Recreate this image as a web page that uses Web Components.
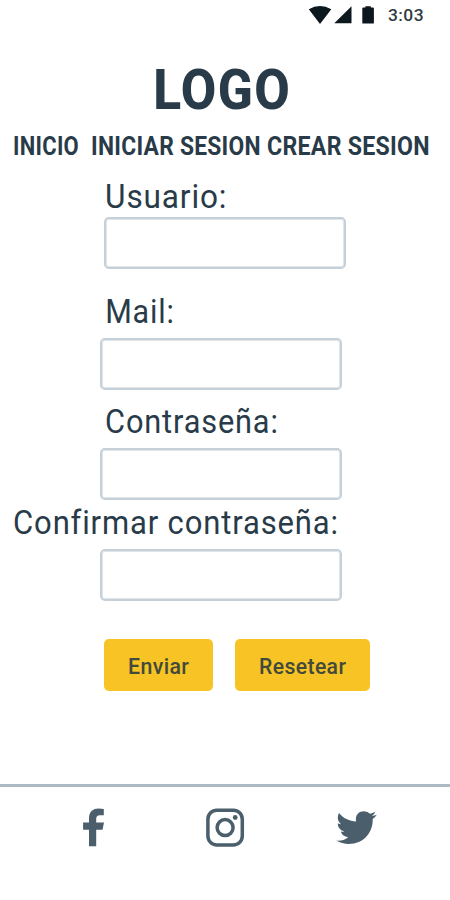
<!DOCTYPE html>
<html lang="es">
<head>
<meta charset="utf-8">
<title>Crear sesion</title>
<style>
html, body { margin: 0; background: #fff; }
body { font-family: Roboto, "Liberation Sans", sans-serif; color: #293b48; }
</style>
</head>
<body>
<app-screen></app-screen>
<script>
const define = (name, html, setup) => customElements.define(name, class extends HTMLElement {
  connectedCallback() {
    if (this.shadowRoot) return;
    this.attachShadow({ mode: 'open' }).innerHTML = html;
    if (setup) setup(this, this.shadowRoot);
  }
});

// A single line of type condensed or widened so its ink spans exactly [width] pixels.
const ctx = document.createElement('canvas').getContext('2d');
define('fit-text', `
<style>
:host { display: block; white-space: nowrap; flex: none; }
span { display: inline-block; transform-origin: 0 50%; font-variant-ligatures: none; }
</style><span></span>`, (el, root) => {
  const span = root.querySelector('span');
  const size = el.getAttribute('size'), weight = el.getAttribute('weight') || 400;
  const width = +el.getAttribute('width'), text = el.getAttribute('text');
  const spacing = +(el.getAttribute('spacing') || 0);
  span.textContent = text;
  span.style.letterSpacing = spacing + 'px';
  el.style.cssText += `;width:${width}px;height:${el.getAttribute('line')}px;line-height:${el.getAttribute('line')}px;font-size:${size}px;font-weight:${weight}`;
  ctx.font = `${weight} ${size}px Roboto, "Liberation Sans", sans-serif`;
  const m = ctx.measureText(text);
  const k = width / (m.actualBoundingBoxRight + m.actualBoundingBoxLeft + spacing * (text.length - 1));
  span.style.transform = `translateX(${m.actualBoundingBoxLeft * k}px) scaleX(${k})`;
});

define('status-bar', `
<style>
:host { display: flex; height: 30px; justify-content: flex-end; padding-right: 27px; color: #2f3b43; }
svg { width: 76px; height: 30px; margin-right: 4px; fill: #0d171e; }
</style>
<svg viewBox="308 0 76 30"><path d="M308.8 9.3Q320 2.8 331.3 9.3L320 23.9zM334.3 23.3L351.5 6.3V23.3zM362.3 8.4q0-.9.9-.9h2.2V6.2h5.4v1.3h2.2q.9 0 .9.9v14.3q0 .9-.9.9h-9.8q-.9 0-.9-.9z"/></svg>
<fit-text text="3:03" size="16.8" weight="500" spacing="0.4" width="35" line="30"></fit-text>`);

define('nav-bar', `
<style>:host { display: flex; padding: 1.5px 0 0 13.5px; }
fit-text:nth-of-type(2) { margin: 0 8px 0 13.5px; }</style>
<fit-text text="INICIO" size="25" weight="700" spacing="0.3" width="64.5" line="30"></fit-text>
<fit-text text="INICIAR SESION" size="25" weight="700" spacing="0.3" width="168" line="30"></fit-text>
<fit-text text="CREAR SESION" size="25" weight="700" spacing="0.3" width="161" line="30"></fit-text>`);

define('form-field', `
<style>
:host { display: block; }
.box { display: block; box-sizing: border-box; width: 242px; height: 52px; margin: 0; padding: 0 8px; border: 2px solid #c6d0d8; border-radius: 5px; background: #fff; outline: none; box-shadow: inset 0 0 0 1px #e1e6ea; }
</style>
<div class="label"></div><input class="box">`, (el, root) => {
  const label = document.createElement('fit-text');
  for (const [k, v] of Object.entries({ text: el.getAttribute('label'), width: el.getAttribute('width'), size: 33, line: 41, spacing: 0.9 })) label.setAttribute(k, v);
  label.style.marginLeft = el.getAttribute('indent') + 'px';
  root.querySelector('.label').append(label);
  const box = root.querySelector('input');
  box.setAttribute('aria-label', el.getAttribute('label'));
  box.style.marginLeft = el.getAttribute('box') + 'px';
  box.style.marginTop = el.getAttribute('gap') + 'px';
});

define('action-button', `
<style>
:host { display: block; flex: none; }
button { display: flex; justify-content: center; align-items: center; width: 100%; height: 52px; margin: 0; padding: 2px 0 0 1px; border: 0; border-radius: 5px; background: #f8c325; color: #414a3b; font-family: inherit; }
</style><button><slot></slot></button>`);

define('social-bar', `
<style>
:host { display: flex; justify-content: space-between; box-sizing: border-box; height: 80px; margin-top: 93px; padding: 21px 72px 0 81px; border-top: 3px solid #adbac6; }
svg { display: block; height: 40px; fill: #4b5e6c; }
svg:nth-of-type(2) { margin-left: 8px; }
</style>
<svg width="25" viewBox="81 808 25 40"><path d="M89 846.3V829.8H83.1V822.5H89V818.3C89 811.8 92.8 808.5 98.6 808.5Q101.6 808.5 103.8 808.9V815.2H100.5C97.2 815.2 96.2 816.8 96.2 819V822.5H104L102.5 829.8H96.2V846.3z"/></svg>
<svg width="40" viewBox="205 808 40 40"><g fill="none" stroke="#4b5e6c" stroke-width="3.5"><rect x="207.9" y="810.2" width="34.4" height="34.8" rx="9"/><circle cx="225.1" cy="827.6" r="8"/></g><circle cx="235.2" cy="817.5" r="2.4"/></svg>
<svg width="42" viewBox="336 808 42 40"><path d="M339 812.9C343 818 349.5 821.2 356.1 821.5C354.7 814.3 359.4 811.2 364 811.2Q367.8 811.2 370.1 813.8Q372.7 813.3 375.3 811.8Q374.4 814.5 372 816.1Q374.5 815.8 376.8 814.8Q375.3 817.3 372.7 819C373.2 832.5 363.5 844 348.8 844Q342 844 336.2 840.6Q343.2 841.3 348.2 837.2Q342.5 836.8 340.7 831.6Q342.6 832 344.2 831.4C340 830.4 337.7 827 337.8 823.3Q339.4 824.2 341.3 824.3C337.4 821.2 337 816.8 339 812.9z"/></svg>`);

define('app-screen', `
<style>
:host { display: flex; flex-direction: column; width: 450px; height: 900px; background: #fff; overflow: hidden; }
.logo { margin: 30px 0 10px 156px; }
.actions { display: flex; gap: 21.5px; margin: 38px 0 0 103.5px; }
</style>
<status-bar></status-bar>
<fit-text class="logo" text="LOGO" size="55" weight="800" spacing="1.5" width="132" line="60"></fit-text>
<nav-bar></nav-bar>
<form-field style="margin-top:14px" label="Usuario:" width="117.5" indent="106.5" box="104" gap="0.3"></form-field>
<form-field style="margin-top:22px" label="Mail:" width="65" indent="106.5" box="100.2" gap="6"></form-field>
<form-field style="margin-top:11px" label="Contraseña:" width="170" indent="106" box="100.2" gap="6"></form-field>
<form-field style="margin-top:2px" label="Confirmar contraseña:" width="321" indent="13.5" box="100.2" gap="6"></form-field>
<div class="actions">
<action-button style="width:109.5px"><fit-text text="Enviar" size="22.3" weight="500" spacing="0.4" width="60" line="50"></fit-text></action-button>
<action-button style="width:135px"><fit-text text="Resetear" size="22.3" weight="500" spacing="0.4" width="86" line="50"></fit-text></action-button>
</div>
<social-bar></social-bar>`);
</script>
</body>
</html>
